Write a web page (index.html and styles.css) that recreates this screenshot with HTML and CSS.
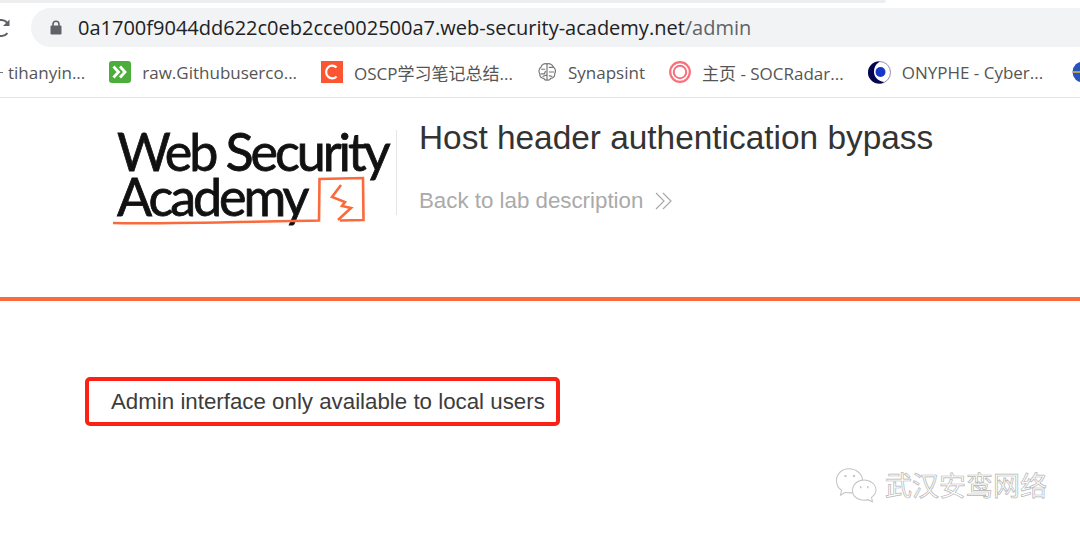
FILE: index.html
```html
<!DOCTYPE html>
<html lang="zh">
<head>
    <meta charset="UTF-8">
    <meta name="viewport" content="width=device-width, initial-scale=1.0">
    <title>Host header authentication bypass</title>
    <link rel="stylesheet" href="styles.css">
</head>
<body>
    <div class="tab-strip"><div class="tab-edge"></div></div>

    <div class="toolbar">
        <svg class="reload" width="12" height="20" viewBox="0 0 12 20">
            <path d="M9.500 5 A8 8 0 1 0 9.500 15" fill="none" stroke="#5f6368" stroke-width="2"/>
            <path d="M5 8 H11.500 V1.500 Z" fill="#5f6368"/>
        </svg>
        <div class="address">
            <svg class="lock" width="12" height="15" viewBox="0 0 12 15">
                <path d="M3 6 V4.200 a3 3 0 0 1 6 0 V6" fill="none" stroke="#5f6368" stroke-width="1.600"/>
                <rect x="0.500" y="5.500" width="11" height="9" rx="1.200" fill="#5f6368"/>
            </svg>
            <span class="host">0a1700f9044dd622c0eb2cce002500a7.web-security-academy.net</span><span class="path">/admin</span>
        </div>
    </div>

    <div class="bookmarks">
        <span class="mark mark-first"><span class="dash"></span>tihanyin...</span>
        <span class="mark">
            <svg width="22" height="22" viewBox="0 0 22 22">
                <rect width="22" height="22" rx="3" fill="#4cae3a"/>
                <path d="M4.500 5.500 L9.500 11 L4.500 16.500 M11 5.500 L16 11 L11 16.500" fill="none" stroke="#fff" stroke-width="2.800"/>
            </svg>
            raw.Githubuserco...
        </span>
        <span class="mark">
            <svg width="22" height="22" viewBox="0 0 22 22">
                <rect width="22" height="22" fill="#fc5531"/>
                <path d="M15.500 6.600 A6 6.400 0 1 0 15.500 15.400" fill="none" stroke="#fff" stroke-width="2.200"/>
            </svg>
            OSCP学习笔记总结...
        </span>
        <span class="mark">
            <svg width="20" height="22" viewBox="0 0 22 22" fill="none" stroke="#777" stroke-width="1.300">
                <path d="M11 2 C8 1 5 3 4.500 5.500 C2 7 1.500 11 3 13 C3 16 5 18 7.500 18 C8.500 20 10 20.500 11 19.500 C12.500 20.500 14 20 15 18 C17.500 18 19.500 16 19.500 13 C21 11 20.500 7 18 5.500 C17 3 14 1 11 2 Z"/>
                <path d="M11 2 V19.500 M4.500 8 H9 M13 6 H18 M4 13 H8 L9.500 10 M13 11 H19 M6 16 L11 14 M13 15 L17 16"/>
            </svg>
            Synapsint
        </span>
        <span class="mark">
            <svg width="22" height="22" viewBox="0 0 22 22" fill="none" stroke="#f8707a">
                <circle cx="11" cy="11" r="9.800" stroke-width="2.200"/>
                <circle cx="11" cy="11" r="6.200" stroke-width="2"/>
            </svg>
            主页 - SOCRadar...
        </span>
        <span class="mark">
            <svg width="23" height="23" viewBox="0 0 23 23">
                <circle cx="11.500" cy="11.500" r="11" fill="#fff" stroke="#8f8fb0" stroke-width="1"/>
                <path d="M11 0.500 A11 11 0 0 0 11 22.500 C13 22.500 15 22 16 21 C10 20 6 16 6 11 C6 6 8 3 12 0.500 Z" fill="#04044f"/>
                <circle cx="12.500" cy="11" r="5" fill="#1638c9"/>
            </svg>
            ONYPHE - Cyber...
        </span>
        <svg class="mark-globe" width="22" height="22" viewBox="0 0 22 22">
            <circle cx="11" cy="11" r="10.500" fill="#2a55b8"/>
            <path d="M11 1 V21 M1 11 H21" stroke="#e2b53a" stroke-width="1.500"/>
        </svg>
    </div>

    <header class="lab-header">
        <div class="logo">
            <span class="logo-line">Web Security</span>
            <span class="logo-line">Academy</span>
            <svg class="logo-mark" width="283" height="100" viewBox="113 130 283 100" fill="none" stroke="#fb6a3c" stroke-width="2.600">
                <path d="M113 223 C160 224 240 222 319 220.500 L319.500 179 L363 178 L363.500 220 L340 220.500"/>
                <path d="M341 185 L332 197 L345 202 L342 206 L351 208 L338 220"/>
            </svg>
        </div>
        <div class="lab-title">
            <h2>Host header authentication bypass</h2>
            <a class="back-link">Back to lab description
                <svg width="18" height="18" viewBox="0 0 18 18" fill="none" stroke="#aaa" stroke-width="1.200">
                    <path d="M1 1 L9 9 L1 17 M8 1 L16 9 L8 17"/>
                </svg>
            </a>
        </div>
    </header>

    <main class="content">
        <div class="notice">Admin interface only available to local users</div>
    </main>

    <div class="watermark">
        <svg width="44" height="36" viewBox="0 0 44 32" preserveAspectRatio="none" fill="#fff" stroke="#c4c4c4" stroke-width="1">
            <path d="M14 1.500 C6.500 1.500 1.500 6.500 1.500 12 C1.500 16 3.500 19 6.500 20.500 L5.500 25 L10.500 22.500 C12 23 14 23 16 23 C22 23 27.500 18 27.500 12 C27.500 6.500 21.500 1.500 14 1.500 Z"/>
            <path d="M29 11.500 C22.500 11.500 17.500 15.500 17.500 21 C17.500 26 22.500 29.500 29 29.500 C30 29.500 31.500 29.500 33 29 L37.500 31 L36.500 27 C39 25.500 41 23.500 41 20.500 C41 15.500 35.500 11.500 29 11.500 Z"/>
            <path d="M9.500 8 h2 M18 8 h2 M25 18 h1.500 M32 18 h1.500" stroke-width="1.600"/>
        </svg>
        <span>武汉安鸾网络</span>
    </div>
</body>
</html>
```

FILE: styles.css
```css
body {
    margin: 0;
    height: 534px;
    overflow: hidden;
    background-color: #fff;
    font-family: "Liberation Sans", Arial, sans-serif;
    color: #333;
    position: relative;
}

.tab-strip {
    height: 8px;
    background-color: #fff;
}

.tab-edge {
    width: 886px;
    height: 3px;
    background-color: #eceef0;
    border-bottom-right-radius: 6px;
}

.toolbar {
    height: 39px;
    display: flex;
    align-items: center;
    gap: 21px;
    margin-left: -2px;
}

.reload {
    flex: none;
}

.address {
    flex: 1;
    height: 39px;
    display: flex;
    align-items: center;
    background-color: #f1f3f4;
    border-radius: 20px 0 0 20px;
    padding-left: 19px;
    font-family: "Open Sans", "Noto Sans", sans-serif;
    font-size: 20px;
    white-space: nowrap;
}

.lock {
    margin-right: 16px;
    flex: none;
}

.host {
    color: #202124;
}

.path {
    color: #5f6368;
}

.bookmarks {
    height: 51px;
    box-sizing: border-box;
    display: flex;
    align-items: center;
    gap: 24px;
    border-bottom: 1px solid #e4e4e4;
    font-family: "Open Sans", "Noto Sans", "Noto Sans CJK SC", sans-serif;
    font-size: 17px;
    color: #555;
    white-space: nowrap;
}

.mark {
    display: flex;
    align-items: center;
    gap: 11px;
    flex: none;
}

.mark svg {
    flex: none;
}

.dash {
    width: 3px;
    height: 1px;
    background-color: #777;
    margin-right: -6px;
}

.mark-globe {
    flex: none;
    margin-left: 5px;
}

.lab-header {
    height: 203px;
    box-sizing: border-box;
    border-bottom: 4px solid #fb6a3c;
    display: flex;
    align-items: flex-start;
    padding: 22px 0 0 113px;
}

.logo {
    width: 284px;
    height: 85px;
    margin-top: 10px;
    border-right: 1px solid #e6e6e6;
    position: relative;
    box-sizing: border-box;
    flex: none;
    padding-left: 4px;
}

.logo-line {
    display: block;
    position: relative;
    top: -1px;
    font-family: Lato, "Open Sans", sans-serif;
    font-size: 52px;
    line-height: 45px;
    letter-spacing: -3.050px;
    color: #111;
    -webkit-text-stroke: 0.800px #111;
    white-space: nowrap;
}

.logo-mark {
    position: absolute;
    left: 0;
    top: 0;
}

.lab-title {
    padding-left: 22px;
}

.lab-title h2 {
    margin: 0;
    font-weight: normal;
    font-size: 33.400px;
    line-height: 36px;
    color: #333;
    white-space: nowrap;
}

.back-link {
    display: flex;
    align-items: center;
    gap: 12px;
    margin-top: 32px;
    font-size: 22.300px;
    line-height: 26px;
    color: #aaa;
}

.content {
    padding: 76px 0 0 85px;
}

.notice {
    box-sizing: border-box;
    width: 475px;
    height: 49px;
    border: 4px solid #fb2114;
    border-radius: 5px;
    padding-left: 22px;
    font-size: 22.300px;
    line-height: 41px;
    color: #3c3c3c;
    white-space: nowrap;
}

.watermark {
    position: absolute;
    left: 835px;
    top: 467px;
    display: flex;
    align-items: center;
    gap: 6px;
    font-family: "Noto Sans CJK SC", sans-serif;
    font-size: 27px;
    line-height: 36px;
    color: #fff;
    -webkit-text-stroke: 0.700px #b5b5b5;
}
```
